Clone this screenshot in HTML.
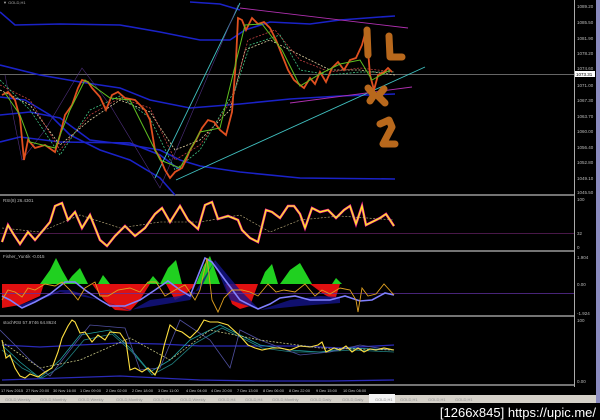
<!DOCTYPE html>
<html><head><meta charset="utf-8"><style>
html,body{margin:0;padding:0;background:#000;width:600px;height:420px;overflow:hidden}
svg{display:block}
text{font-family:"Liberation Sans",sans-serif}
</style></head><body>
<svg width="600" height="420" viewBox="0 0 600 420" xmlns="http://www.w3.org/2000/svg">
<rect width="600" height="420" fill="#000"/>
<rect x="596" y="0" width="4" height="408" fill="#8c8cc0"/>
<line x1="574.5" y1="0" x2="574.5" y2="387" stroke="#aaa" stroke-width="1"/>
<g stroke="#9a9a9a" stroke-width="1.5">
<line x1="0" y1="195" x2="574" y2="195"/>
<line x1="0" y1="251" x2="574" y2="251"/>
<line x1="0" y1="316" x2="574" y2="316"/>
<line x1="0" y1="385" x2="574" y2="385"/>
</g>
<g font-size="4.5" fill="#bbb">
<text x="577" y="8">1089.20</text><text x="577" y="24">1085.50</text><text x="577" y="40">1081.90</text>
<text x="577" y="55">1078.20</text><text x="577" y="70">1074.60</text><text x="577" y="87">1071.00</text>
<text x="577" y="102">1067.30</text><text x="577" y="118">1063.70</text><text x="577" y="133">1060.00</text>
<text x="577" y="149">1056.40</text><text x="577" y="164">1052.80</text><text x="577" y="180">1049.10</text>
<text x="577" y="194">1045.50</text>
<text x="577" y="201">100</text><text x="577" y="235">32</text><text x="577" y="249">0</text>
<text x="577" y="259">1.904</text><text x="577" y="286">0.00</text><text x="577" y="315">-1.924</text>
<text x="577" y="322">100</text><text x="577" y="383">0.00</text>
</g>
<rect x="575" y="71" width="20" height="6" fill="#fff"/>
<text x="576" y="76" font-size="4.5" fill="#000">1073.31</text>
<line x1="0" y1="74.5" x2="574" y2="74.5" stroke="#888" stroke-width="0.8"/>
<text x="3" y="4" font-size="4" fill="#aaa">▼ GOLD,H1</text>

<g fill="none" stroke="#1a22c8" stroke-width="1.6">
<polyline points="0,12 15,25 60,24 120,25 160,32 200,40 230,40 245,30 270,22 310,24 340,20 380,17 395,16"/>
<polyline points="190,2 220,4 240,10"/>
<polyline points="0,65 40,75 80,82 120,88 150,100 190,108 240,104 290,99 340,96 395,94"/>
<polyline points="0,115 30,112 60,118 90,140 130,145 160,150 180,160 200,166 240,172 300,178 395,179"/>
<polyline points="0,142 20,137 60,142 130,143 160,155 180,170"/>
<polyline points="0,97 25,100 50,115 70,135 100,150 130,160 160,178 175,195"/>
</g>
<g fill="none" stroke-width="0.9">
<line x1="155" y1="178" x2="240" y2="3" stroke="#40c0c0"/>
<line x1="176" y1="180" x2="425" y2="67" stroke="#40c0c0"/>
<line x1="240" y1="8" x2="408" y2="28" stroke="#b030b0"/>
<line x1="290" y1="103" x2="412" y2="87" stroke="#b030b0"/>
<polyline points="5,75 22,160 45,130 82,68 110,105 160,188 238,5" stroke="#503080" stroke-width="0.6"/>
</g>
<g fill="none" stroke-width="0.8" stroke-dasharray="2,1.5">
<polyline points="0,90 30,105 60,145 90,120 120,100 150,112 175,150 200,140 230,110 245,50 270,40 300,55 330,70 360,70 395,75" stroke="#e0d0a0"/>
<polyline points="0,85 30,100 60,150 90,115 120,98 150,108 175,160 200,145 232,100 248,40 275,30 300,60 330,72 360,68 395,72" stroke="#c04040"/>
<polyline points="0,80 30,110 60,155 90,110 120,96 150,118 175,170 200,150 235,90 250,45 280,35 300,70 330,75 360,72 395,72" stroke="#40c080"/>
</g>
<polyline fill="none" stroke="#e05020" stroke-width="1.8" points="2,95 8,92 15,100 20,118 24,160 28,140 35,148 45,145 55,152 60,135 65,115 72,105 78,88 82,80 88,82 92,88 100,97 106,110 112,95 118,92 125,98 135,100 145,110 150,120 155,150 160,158 165,170 170,178 175,172 182,168 186,160 190,150 196,140 202,128 208,120 214,122 220,130 226,135 232,112 236,60 238,18 242,20 246,30 252,18 258,24 264,22 270,28 276,40 282,55 288,70 294,80 300,85 304,88 310,78 315,84 320,72 326,82 332,68 338,62 344,70 350,60 356,58 362,45 366,30 368,50 370,75 374,90 378,75 384,72 388,68 392,72"/>
<polyline fill="none" stroke="#60c020" stroke-width="1" points="5,93 20,115 30,142 55,148 70,110 85,80 110,98 130,100 160,160 180,168 200,132 220,128 236,62 245,25 262,24 282,50 300,86 320,74 340,64 360,60 372,80 390,70"/>
<g fill="none" stroke="#b8681c" stroke-width="7" stroke-linecap="round" stroke-linejoin="round">
<line x1="367" y1="30" x2="368" y2="55"/>
<polyline points="389,36 390,57 402,57"/>
<polyline points="368,88 374,95 370,101"/>
<polyline points="384,89 378,96 385,103"/>
<polyline points="380,124 389,120 392,127 383,144 395,144"/>
</g>

<text x="3" y="202" font-size="4.5" fill="#bbb">RSI(8) 26.4301</text>
<line x1="0" y1="233.5" x2="574" y2="233.5" stroke="#602060" stroke-width="0.8"/>
<polyline fill="none" stroke="#ff20a0" stroke-width="2.5" points="2,242 8,225 14,235 20,244 28,232 35,240 45,228 50,222 55,206 62,203 68,220 75,212 82,228 90,215 100,240 107,246 115,236 125,226 135,236 145,228 155,214 162,208 170,222 180,206 188,220 198,229 205,205 212,202 218,219 228,216 238,220 242,230 250,238 258,242 266,210 272,212 280,218 288,206 294,206 300,214 305,228 312,208 320,212 328,210 336,218 344,210 350,206 356,224 362,206 366,225 372,222 380,218 386,214 394,226"/>
<polyline fill="none" stroke="#f8f020" stroke-width="1.3" points="2,242 8,225 14,235 20,244 28,232 35,240 45,228 50,222 55,206 62,203 68,220 75,212 82,228 90,215 100,240 107,246 115,236 125,226 135,236 145,228 155,214 162,208 170,222 180,206 188,220 198,229 205,205 212,202 218,219 228,216 238,220 242,230 250,238 258,242 266,210 272,212 280,218 288,206 294,206 300,214 305,228 312,208 320,212 328,210 336,218 344,210 350,206 356,224 362,206 366,225 372,222 380,218 386,214 394,226"/>
<polyline fill="none" stroke="#c0b080" stroke-width="0.6" stroke-dasharray="2,1.5" points="2,228 40,232 80,215 120,228 160,222 200,222 240,215 270,232 300,220 340,216 394,220"/>

<text x="3" y="258" font-size="4.5" fill="#bbb">Fisher_Yur4ik -0.015</text>
<g fill="#20d020">
<polygon points="40,284 50,270 56,258 62,270 70,284"/>
<polygon points="66,284 72,276 80,268 88,284"/>
<polygon points="98,284 103,275 110,284"/>
<polygon points="147,284 153,276 160,284"/>
<polygon points="160,284 168,268 176,260 182,284"/>
<polygon points="196,284 204,265 210,256 220,284"/>
<polygon points="260,284 265,272 272,264 278,284"/>
<polygon points="280,284 290,270 300,263 312,284"/>
<polygon points="332,284 336,278 342,284"/>
</g>
<g fill="#e01010">
<polygon points="2,284 44,284 40,296 20,305 2,308"/>
<polygon points="92,284 150,284 140,300 130,311 115,310 104,300"/>
<polygon points="166,284 196,284 186,294 175,300"/>
<polygon points="225,284 258,284 250,306 240,309 232,304"/>
<polygon points="310,284 340,284 335,300 325,295"/>
</g>
<polygon fill="#14148a" points="20,305 60,290 70,290 100,300 130,311 150,300 180,296 200,290 215,260 240,290 260,310 290,300 320,296 340,297 340,303 300,306 260,310 230,300 214,262 190,300 130,310 100,300 60,292 20,308" opacity="0.8"/>
<line x1="0" y1="293.5" x2="574" y2="293.5" stroke="#6030a0" stroke-width="0.8"/>
<polyline fill="none" stroke="#8080ff" stroke-width="1.6" points="2,296 10,300 22,308 35,302 50,294 65,282 75,282 85,290 100,300 110,306 125,306 140,300 155,290 168,281 180,290 190,296 205,258 212,262 225,280 240,300 258,309 270,304 280,298 295,296 310,300 330,300 345,296 360,301 372,300 385,293 394,295"/>
<polyline fill="none" stroke="#e0a020" stroke-width="0.9" points="2,300 8,290 15,292 22,297 28,288 35,290 45,284 55,286 62,282 70,290 78,300 85,288 95,282 100,296 108,296 118,290 130,288 140,292 148,282 156,282 165,296 175,290 185,285 195,300 200,290 207,258 212,300 218,312 224,298 232,290 242,290 250,292 258,296 268,284 276,292 284,290 295,292 305,284 315,296 322,290 330,294 340,288 350,290 356,300 358,312 362,288 368,296 376,294 384,284 394,295"/>

<text x="3" y="324" font-size="4.5" fill="#bbb">stochRSI 57.9746 64.8624</text>
<g fill="none" stroke-width="0.8">
<polyline stroke="#2a2ab8" stroke-width="1.3" points="2,345 40,347 80,345 120,343 160,344 200,346 250,346 300,346 340,348 394,345"/>
<polyline stroke="#2a2ab8" stroke-width="1.3" points="2,380 60,378 120,376 200,380 260,381 330,381 394,380"/>
<polyline stroke="#20a0a0" points="2,345 20,362 40,378 60,360 80,335 110,330 130,348 150,372 170,360 190,340 220,325 240,335 260,345 290,350 320,352 350,348 394,350"/>
<polyline stroke="#208080" points="2,350 22,368 42,378 62,366 84,340 112,334 132,352 152,375 172,364 194,344 222,328 242,338 262,348 292,352 322,352 352,350 394,352"/>
<polyline stroke="#5050a0" points="0,330 30,360 50,376 70,350 90,325 125,328 140,370 160,368 180,320 210,340 230,368 240,330 260,340 300,355 330,352 360,345 390,350"/>
<polyline stroke="#ffe040" stroke-width="1.1" points="2,340 6,358 10,355 15,368 20,376 25,378 30,374 38,377 45,372 52,368 58,352 62,338 68,326 72,320 75,322 80,333 85,332 92,342 98,335 105,340 110,332 120,333 126,342 130,370 135,368 142,372 148,368 155,375 160,364 164,346 170,325 176,330 182,332 190,338 198,330 204,320 210,322 218,322 228,325 240,336 248,345 255,348 262,350 272,348 280,348 290,350 300,346 310,347 318,345 322,342 326,352 334,348 340,350 346,346 352,352 358,348 364,352 370,349 376,350 384,348 394,350"/>
<polyline stroke="#c0c080" stroke-dasharray="2,1.5" points="2,342 40,368 80,360 130,338 170,360 210,330 260,340 320,348 394,350"/>
</g>

<g font-size="3.9" fill="#ccc">
<text x="1" y="392">17 Nov 2015</text><text x="26" y="392">27 Nov 20:00</text><text x="53" y="392">30 Nov 16:00</text>
<text x="80" y="392">1 Dec 09:00</text><text x="106" y="392">2 Dec 02:00</text><text x="132" y="392">2 Dec 18:00</text>
<text x="158" y="392">3 Dec 11:00</text><text x="186" y="392">4 Dec 04:00</text><text x="211" y="392">4 Dec 20:00</text>
<text x="237" y="392">7 Dec 13:00</text><text x="263" y="392">8 Dec 06:00</text><text x="289" y="392">8 Dec 22:00</text>
<text x="316" y="392">9 Dec 15:00</text><text x="343" y="392">10 Dec 08:00</text>
</g>
<rect x="0" y="395" width="596" height="8" fill="#d4d0c8"/>
<rect x="369" y="394" width="26" height="9" fill="#f4f4f4"/>
<g font-size="4" fill="#909090">
<text x="5" y="401">GOLD,Weekly</text><text x="40" y="401">GOLD,Monthly</text><text x="78" y="401">GOLD,Weekly</text>
<text x="116" y="401">GOLD,Monthly</text><text x="153" y="401">GOLD,H4</text><text x="180" y="401">GOLD,Weekly</text>
<text x="218" y="401">GOLD,H4</text><text x="245" y="401">GOLD,H4</text><text x="272" y="401">GOLD,Monthly</text>
<text x="310" y="401">GOLD,Daily</text><text x="342" y="401">GOLD,Daily</text><text x="375" y="401">GOLD,H1</text>
<text x="400" y="401">GOLD,H1</text><text x="428" y="401">GOLD,H1</text><text x="455" y="401">GOLD,H1</text>
</g>
<rect x="0" y="403" width="600" height="17" fill="#000"/>
<text x="596" y="417" font-size="13" fill="#fff" text-anchor="end" font-family="Liberation Sans Narrow, Liberation Sans, sans-serif">[1266x845] https://upic.me/</text>
</svg>
</body></html>
